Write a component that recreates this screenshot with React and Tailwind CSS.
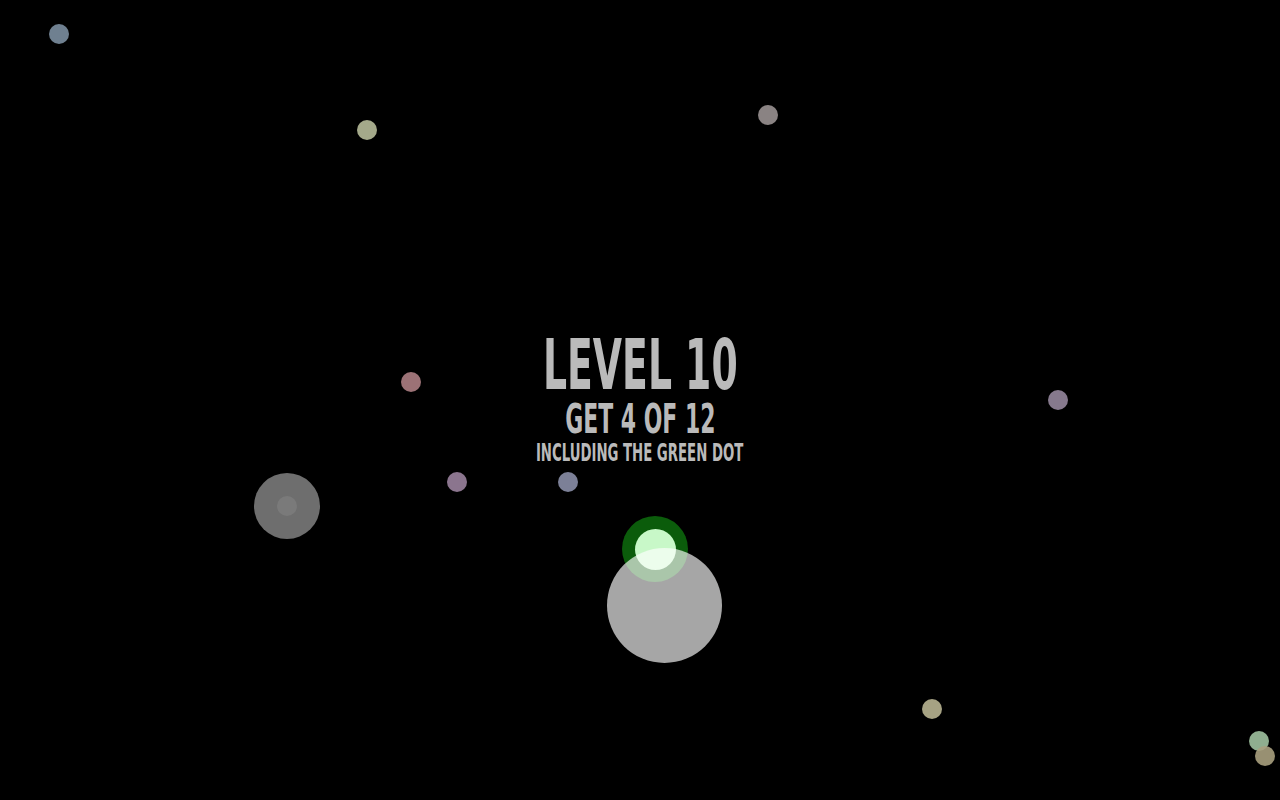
import React from "react";

// free-floating dots on the play field
const dots = [
  "left-[49px] top-[24px] bg-[#6f8090]",
  "left-[357px] top-[120px] bg-[#a4a98a]",
  "left-[758px] top-[105px] bg-[#8a8383]",
  "left-[401px] top-[372px] bg-[#9c7276]",
  "left-[1048px] top-[390px] bg-[#86798d]",
  "left-[447px] top-[472px] bg-[#8b758e]",
  "left-[558px] top-[472px] bg-[#7c8097]",
  "left-[922px] top-[699px] bg-[#a6a283]",
  "left-[1249px] top-[731px] bg-[#8fae8f]",
  "left-[1255px] top-[746px] bg-[#a8a07e]/90",
];

export default function App() {
  return (
    <div className="relative w-full h-[800px] bg-black overflow-hidden">
      {dots.map((c, i) => (
        <div key={i} className={"absolute w-[20px] h-[20px] rounded-full " + c} />
      ))}

      {/* grey ghost dot */}
      <div className="absolute left-[254px] top-[473px] w-[66px] h-[66px] rounded-full bg-[#6e6e6e] flex items-center justify-center">
        <div className="w-[20px] h-[20px] rounded-full bg-[#7a7a7a]" />
      </div>

      {/* green target */}
      <div className="absolute left-[622px] top-[516px] w-[66px] h-[66px] rounded-full bg-[#0b5c0b] flex items-center justify-center">
        <div className="w-[41px] h-[41px] rounded-full bg-[#c8f8c8]" />
      </div>

      {/* player */}
      <div className="absolute left-[607px] top-[548px] w-[115px] h-[115px] rounded-full bg-white/65" />

      <div
        className="relative flex flex-col items-center pt-[331px] font-bold text-[#bababa] font-stretch-condensed"
        style={{ fontFamily: '"DejaVu Sans Condensed", "DejaVu Sans", sans-serif' }}
      >
        <div className="text-[70px] leading-[68px] scale-x-[0.6] whitespace-nowrap">LEVEL 10</div>
        <div className="text-[41px] leading-[41px] scale-x-[0.595] whitespace-nowrap">GET 4 OF 12</div>
        <div className="mt-[1px] text-[24px] leading-[24px] scale-x-[0.615] whitespace-nowrap">INCLUDING THE GREEN DOT</div>
      </div>
    </div>
  );
}
